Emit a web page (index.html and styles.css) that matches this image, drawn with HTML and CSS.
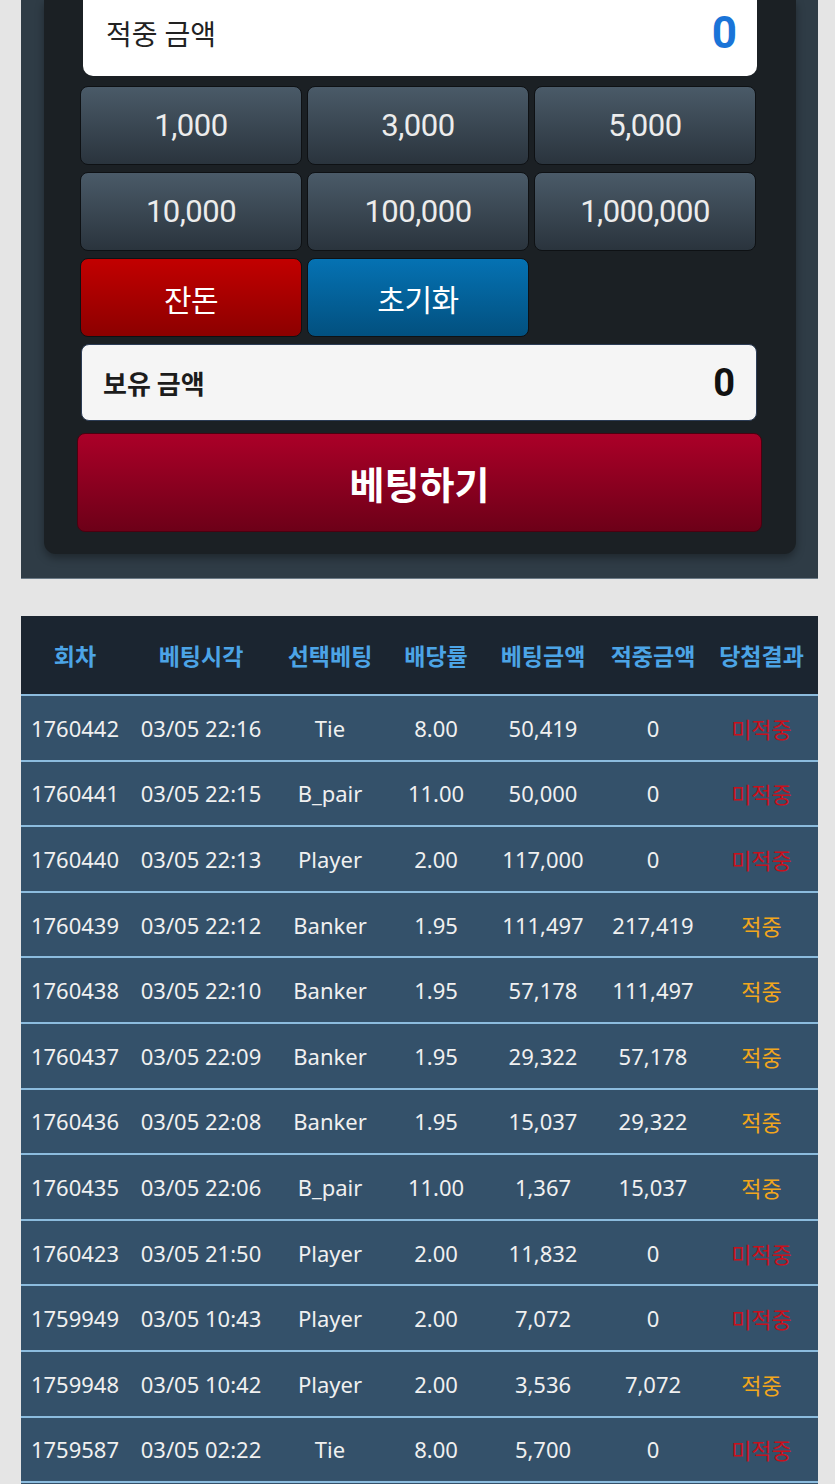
FILE: index.html
```html
<html>

<head>
    <link rel="stylesheet" href="styles.css">
</head>

<body>
    <div class="panel">
        <div class="box">
            <div class="win">
                <span class="win-label">적중 금액</span>
                <span class="win-value">0</span>
            </div>
            <div class="chips">
                <button class="chip">1,000</button>
                <button class="chip">3,000</button>
                <button class="chip">5,000</button>
                <button class="chip">10,000</button>
                <button class="chip">100,000</button>
                <button class="chip">1,000,000</button>
                <button class="chip chip-red">잔돈</button>
                <button class="chip chip-blue">초기화</button>
            </div>
            <div class="own">
                <span class="own-label">보유 금액</span>
                <span class="own-value">0</span>
            </div>
            <button class="bet">베팅하기</button>
        </div>
    </div>

    <table class="history">
        <colgroup>
            <col class="c1">
            <col class="c2">
            <col class="c3">
            <col class="c4">
            <col class="c5">
            <col class="c6">
            <col class="c7">
        </colgroup>
        <thead>
            <tr>
                <th>회차</th>
                <th>베팅시각</th>
                <th>선택베팅</th>
                <th>배당률</th>
                <th>베팅금액</th>
                <th>적중금액</th>
                <th>당첨결과</th>
            </tr>
        </thead>
        <tbody>
            <tr><td>1760442</td><td>03/05 22:16</td><td>Tie</td><td>8.00</td><td>50,419</td><td>0</td><td class="lose">미적중</td></tr>
            <tr><td>1760441</td><td>03/05 22:15</td><td>B_pair</td><td>11.00</td><td>50,000</td><td>0</td><td class="lose">미적중</td></tr>
            <tr><td>1760440</td><td>03/05 22:13</td><td>Player</td><td>2.00</td><td>117,000</td><td>0</td><td class="lose">미적중</td></tr>
            <tr><td>1760439</td><td>03/05 22:12</td><td>Banker</td><td>1.95</td><td>111,497</td><td>217,419</td><td class="win-txt">적중</td></tr>
            <tr><td>1760438</td><td>03/05 22:10</td><td>Banker</td><td>1.95</td><td>57,178</td><td>111,497</td><td class="win-txt">적중</td></tr>
            <tr><td>1760437</td><td>03/05 22:09</td><td>Banker</td><td>1.95</td><td>29,322</td><td>57,178</td><td class="win-txt">적중</td></tr>
            <tr><td>1760436</td><td>03/05 22:08</td><td>Banker</td><td>1.95</td><td>15,037</td><td>29,322</td><td class="win-txt">적중</td></tr>
            <tr><td>1760435</td><td>03/05 22:06</td><td>B_pair</td><td>11.00</td><td>1,367</td><td>15,037</td><td class="win-txt">적중</td></tr>
            <tr><td>1760423</td><td>03/05 21:50</td><td>Player</td><td>2.00</td><td>11,832</td><td>0</td><td class="lose">미적중</td></tr>
            <tr><td>1759949</td><td>03/05 10:43</td><td>Player</td><td>2.00</td><td>7,072</td><td>0</td><td class="lose">미적중</td></tr>
            <tr><td>1759948</td><td>03/05 10:42</td><td>Player</td><td>2.00</td><td>3,536</td><td>7,072</td><td class="win-txt">적중</td></tr>
            <tr><td>1759587</td><td>03/05 02:22</td><td>Tie</td><td>8.00</td><td>5,700</td><td>0</td><td class="lose">미적중</td></tr>
            <tr class="spacer"><td colspan="7"></td></tr>
        </tbody>
    </table>
</body>

</html>
```

FILE: styles.css
```css
body {
    margin: 0;
    background: #e5e5e5;
    font-family: Roboto, "Noto Sans CJK KR", sans-serif;
    overflow: hidden;
}

.panel {
    width: 797px;
    margin-left: 21px;
    box-sizing: border-box;
    padding: 0 22px 24px 23px;
    background: #2f3c46;
    border-bottom: 1px solid #6b7a86;
}

.box {
    background: #1b2024;
    border-radius: 0 0 12px 12px;
    padding: 0 40px 22px 36px;
    box-shadow: 0 4px 8px rgba(0, 0, 0, 0.35);
}

.win {
    display: flex;
    justify-content: space-between;
    align-items: center;
    height: 76px;
    box-sizing: border-box;
    padding: 0 20px 10px 23px;
    margin: 0 -1px 0 3px;
    background: #fff;
    border-radius: 0 0 10px 10px;
}

.win-label {
    font-size: 28px;
    color: #222;
}

.win-value {
    font-size: 44px;
    font-weight: bold;
    color: #1a74d8;
}

.chips {
    display: grid;
    grid-template-columns: repeat(3, 1fr);
    gap: 7px 5px;
    margin-top: 10px;
}

.chip {
    height: 79px;
    border: 1px solid #0e1114;
    border-radius: 8px;
    background: linear-gradient(#4a5a68, #2a343d);
    color: #ececec;
    font-family: Roboto, "Noto Sans CJK KR", sans-serif;
    font-size: 31px;
    letter-spacing: -0.5px;
    padding: 0;
}

.chip-red {
    background: linear-gradient(#c20000, #8c0000);
    color: #fff;
    font-size: 30px;
}

.chip-blue {
    background: linear-gradient(#0572b3, #02507f);
    color: #fff;
    font-size: 30px;
}

.own {
    display: flex;
    justify-content: space-between;
    align-items: center;
    height: 77px;
    box-sizing: border-box;
    margin: 7px -1px 0 1px;
    padding: 0 21px 0 21px;
    background: #f5f5f5;
    border: 1px solid #2c3c55;
    border-radius: 8px;
}

.own-label {
    font-size: 26px;
    font-weight: bold;
    color: #1c1c1c;
    font-family: "Noto Sans CJK KR", sans-serif;
}

.own-value {
    font-size: 38px;
    font-weight: bold;
    color: #111;
}

.bet {
    display: block;
    width: calc(100% + 9px);
    height: 99px;
    margin: 12px 0 0 -3px;
    border: 1px solid #4c0010;
    border-radius: 8px;
    background: linear-gradient(#ab0028, #6d0018);
    color: #fff;
    font-family: "Noto Sans CJK KR", sans-serif;
    font-size: 38px;
    font-weight: bold;
}

.history {
    width: 797px;
    margin: 37px 0 0 21px;
    border-collapse: collapse;
    table-layout: fixed;
    font-family: "Noto Sans", "Noto Sans CJK KR", sans-serif;
}

.c1 { width: 108px; }
.c2 { width: 144px; }
.c3 { width: 114px; }
.c4 { width: 98px; }
.c5 { width: 116px; }
.c6 { width: 104px; }
.c7 { width: 113px; }

.history th {
    height: 79px;
    padding: 0;
    background: #1b2530;
    color: #4ca4e6;
    font-family: "Noto Sans CJK KR", sans-serif;
    font-size: 23px;
    font-weight: bold;
    white-space: nowrap;
}

.history td {
    height: 65.6px;
    padding: 0;
    background: #34516a;
    border-top: 2px solid #8cbcde;
    color: #f0f0f0;
    font-size: 22px;
    text-align: center;
    white-space: nowrap;
}

.history .spacer td {
    height: 40px;
}

.history td.lose {
    color: #c8101c;
}

.history td.win-txt {
    color: #f2a61c;
}
```
